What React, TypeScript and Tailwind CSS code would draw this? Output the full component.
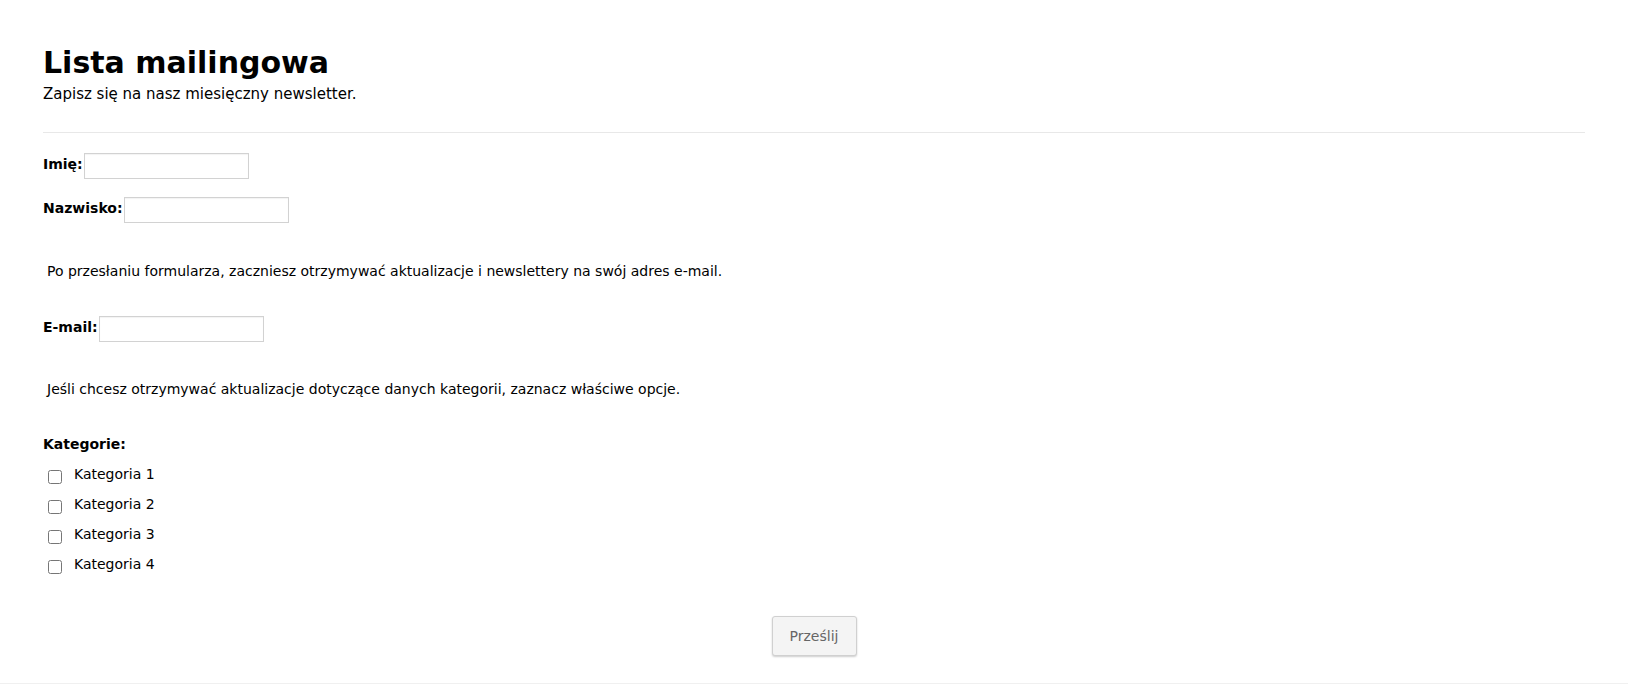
import React from "react";

const categories = ["Kategoria 1", "Kategoria 2", "Kategoria 3", "Kategoria 4"];

function Field({ label }: { label: string }) {
  return (
    <div className="flex items-start">
      <label className="mt-[3px] text-[14px] font-bold leading-[16px]">{label}</label>
      <input
        type="text"
        className="ml-px h-[26px] w-[165px] border border-[#d2d2d2] bg-white px-1 text-[13px] outline-none shadow-[inset_0_1px_1px_rgba(0,0,0,0.05)]"
      />
    </div>
  );
}

export default function App() {
  return (
    <div className="min-h-[684px] bg-white font-['DejaVu_Sans',Verdana,sans-serif] text-black">
      <form className="px-[43px] pt-[45px]" onSubmit={(e) => e.preventDefault()}>
        <h1 className="text-[30px] font-bold leading-[35px]">Lista mailingowa</h1>
        <p className="mt-[6px] text-[15px] leading-[17px]">
          Zapisz się na nasz miesięczny newsletter.
        </p>

        <div className="mt-[29px] border-t border-[#e8e8e8]" />

        <div className="mt-[20px]">
          <Field label="Imię:" />
        </div>
        <div className="mt-[18px]">
          <Field label="Nazwisko:" />
        </div>

        <p className="mt-[40px] pl-1 text-[14px] leading-[16px]">
          Po przesłaniu formularza, zaczniesz otrzymywać aktualizacje i newslettery na swój adres e-mail.
        </p>

        <div className="mt-[37px]">
          <Field label="E-mail:" />
        </div>

        <p className="mt-[39px] pl-1 text-[14px] leading-[16px]">
          Jeśli chcesz otrzymywać aktualizacje dotyczące danych kategorii, zaznacz właściwe opcje.
        </p>

        <p className="mt-[39px] text-[14px] font-bold leading-[16px]">Kategorie:</p>

        <div className="mt-[14px] flex flex-col gap-[12px]">
          {categories.map((c) => (
            <label key={c} className="flex items-start text-[14px] leading-[16px]">
              <input type="checkbox" className="m-0 ml-[5px] mt-[4px] h-[14px] w-[14px]" />
              <span className="ml-[12px]">{c}</span>
            </label>
          ))}
        </div>

        <div className="mt-[42px] flex justify-center">
          <button
            type="submit"
            className="h-[40px] w-[85px] rounded-[3px] border border-[#d0d0d0] bg-[#f4f4f4] text-[14px] text-[#666] shadow-[0_1px_2px_rgba(0,0,0,0.2)]"
          >
            Prześlij
          </button>
        </div>
      </form>
      <div className="mt-[27px] border-t border-[#f0f0f0]" />
    </div>
  );
}
